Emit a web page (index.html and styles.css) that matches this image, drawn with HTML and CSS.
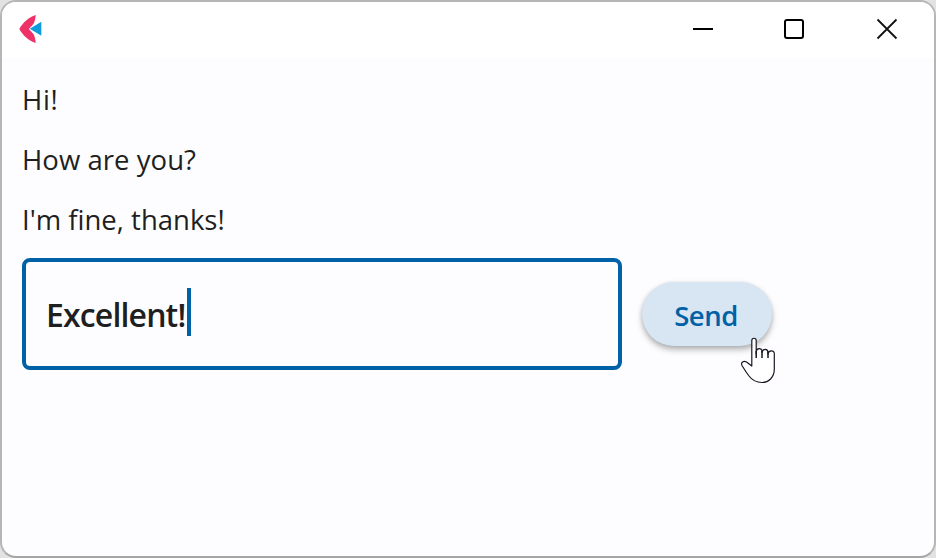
FILE: index.html
```html
<!DOCTYPE html>
<html lang="en">
<head>
<meta charset="utf-8">
<title>Chat</title>
<link rel="stylesheet" href="styles.css">
</head>
<body>
<div class="window">
  <header class="titlebar">
    <svg class="logo" width="24" height="30" viewBox="0 0 24 30">
      <path fill="#ee3167" d="M17.700 1C10.500 3.200 5 8.500 1.300 15C5 21.500 10.500 26.800 17.700 29C17.500 25.500 16.800 22.700 15.600 20.300L10.900 15L15.600 9.700C16.800 7.300 17.500 4.500 17.700 1Z"/>
      <path fill="#0c9bdd" d="M11.800 14.700L23.300 7.700V21.700Z"/>
    </svg>
    <div class="controls">
      <svg width="22" height="22" viewBox="0 0 22 22"><path d="M1 11H21" stroke="#000" stroke-width="2"/></svg>
      <svg width="22" height="22" viewBox="0 0 22 22"><rect x="1" y="2" width="18" height="18" rx="2" fill="none" stroke="#000" stroke-width="2"/></svg>
      <svg width="22" height="22" viewBox="0 0 22 22"><path d="M1.500 1.500L20.500 20.500M20.500 1.500L1.500 20.500" stroke="#111" stroke-width="1.800"/></svg>
    </div>
  </header>
  <main class="chat">
    <p class="message hi">Hi!</p>
    <p class="message how">How are you?</p>
    <p class="message fine">I'm fine, thanks!</p>
    <div class="composer">
      <div class="field"><span class="value">Excellent!</span><span class="caret"></span></div>
      <button class="send">Send</button>
    </div>
  </main>
  <svg class="pointer" width="38" height="50" viewBox="0 0 38 50">
    <path d="M13.800 26V5.500C13.800 2.500 18.200 2.500 18.200 5.500V19V17C18.500 12.500 24 12.500 24 16.500V17.500C24.500 13.200 30 13.200 30 17.500V19C30.500 14.800 36.300 14.800 36.300 18.500V34C36.300 42 31 47.500 24 47.500C18 47.500 14 45 11 41C8 37 6.500 34.500 4 30.500C2.500 27.500 5.500 25.500 8.500 27L13.800 31Z" fill="#fff" stroke="#181824" stroke-width="1.200" stroke-linejoin="round"/>
    <path d="M18.200 16V23M24 16V23M30 17V23" fill="none" stroke="#181824" stroke-width="1.500"/>
  </svg>
</div>
</body>
</html>
```
FILE: styles.css
```css
* { box-sizing: border-box; }
body {
  margin: 0;
  background: #e2e2e2;
  font-family: "Open Sans", "Noto Sans", sans-serif;
  color: #1f1f21;
}
.window {
  position: relative;
  width: 936px;
  height: 558px;
  border: 2px solid #b5b5b5;
  border-bottom-color: #a5a5a5;
  border-radius: 16px;
  background: #fdfdff;
  overflow: hidden;
}
.titlebar {
  display: flex;
  justify-content: space-between;
  align-items: center;
  height: 56px;
  padding: 0 36px 0 16px;
  background: #fff;
}
.logo, .controls svg { display: block; }
.controls {
  display: flex;
  gap: 70px;
  margin-bottom: 2px;
}
.logo { margin-bottom: 2px; }
.chat { padding: 22px 20px; }
.message {
  margin: 0 0 20px;
  font-size: 27.5px;
  font-weight: 400;
  line-height: 40px;
  white-space: nowrap;
}
.hi { letter-spacing: 0.6px; }
.how { letter-spacing: 0.05px; }
.fine { letter-spacing: 0; }
.composer {
  display: flex;
  align-items: center;
  gap: 20px;
  margin-top: -2px;
}
.field {
  display: flex;
  align-items: center;
  width: 600px;
  height: 112px;
  padding-left: 20px;
  border: 4px solid #0061a6;
  border-radius: 8px;
}
.value {
  width: 141px;
  font-size: 32px;
  font-weight: 600;
  letter-spacing: -0.85px;
  white-space: nowrap;
}
.caret {
  width: 4px;
  height: 48px;
  margin-top: -4px;
  background: #0061a6;
}
.send {
  width: 130px;
  height: 64px;
  margin: 0;
  padding: 2px 2px 0 0;
  border: 0;
  border-radius: 32px;
  background: #d8e5f2;
  box-shadow: 0 4px 6px rgba(0, 0, 0, 0.25), 0 1px 4px rgba(0, 0, 0, 0.12);
  color: #0061a6;
  font: 600 27.5px "Open Sans", "Noto Sans", sans-serif;
  letter-spacing: -0.5px;
}
.pointer {
  position: absolute;
  left: 736px;
  top: 333px;
}
```
